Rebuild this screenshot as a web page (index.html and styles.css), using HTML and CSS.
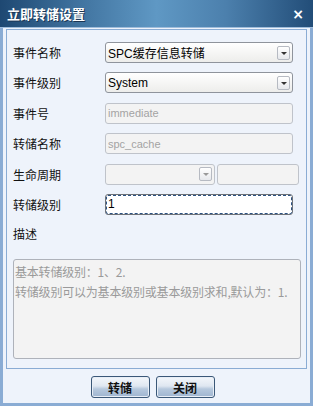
FILE: index.html
```html
<!DOCTYPE html>
<html lang="zh">
<head>
    <meta charset="UTF-8">
    <title>立即转储设置</title>
    <link rel="stylesheet" href="styles.css">
</head>
<body>
    <div class="dialog">
        <div class="titlebar">
            <span class="title">立即转储设置</span>
            <span class="close">×</span>
        </div>
        <div class="dialog-body">
            <div class="panel">
                <div class="row">
                    <span class="label">事件名称</span>
                    <div class="field select"><span class="val">SPC缓存信息转储</span><span class="arrow"></span></div>
                </div>
                <div class="row">
                    <span class="label">事件级别</span>
                    <div class="field select"><span class="val">System</span><span class="arrow"></span></div>
                </div>
                <div class="row">
                    <span class="label">事件号</span>
                    <div class="field disabled"><span class="val">immediate</span></div>
                </div>
                <div class="row">
                    <span class="label">转储名称</span>
                    <div class="field disabled"><span class="val">spc_cache</span></div>
                </div>
                <div class="row">
                    <span class="label">生命周期</span>
                    <div class="pair">
                        <div class="field disabled short"><span class="val"></span><span class="arrow dim"></span></div>
                        <div class="field disabled rest"></div>
                    </div>
                </div>
                <div class="row">
                    <span class="label">转储级别</span>
                    <div class="field focused"><span class="val">1</span></div>
                </div>
                <div class="desc-label">描述</div>
                <div class="desc">基本转储级别：1、2.
转储级别可以为基本级别或基本级别求和,默认为：1.</div>
            </div>
            <div class="buttons">
                <button class="btn">转储</button>
                <button class="btn">关闭</button>
            </div>
        </div>
    </div>
</body>
</html>
```

FILE: styles.css
```css
body {
    margin: 0;
    font-family: "Liberation Sans", "Noto Sans CJK SC", sans-serif;
    font-size: 12px;
}
.dialog {
    width: 313px;
    height: 406px;
    display: flex;
    flex-direction: column;
    background: #eef3fb;
}
.titlebar {
    height: 28px;
    display: flex;
    align-items: center;
    justify-content: space-between;
    padding: 0 9px 0 7px;
    box-sizing: border-box;
    background: linear-gradient(to right, #1e4872 0%, #40739f 25%, #5f98c4 50%, #4c80ad 72%, #224d78 100%);
    border-bottom: 1px solid #9fbddc;
    color: #fff;
}
.title {
    font-family: "Noto Sans CJK SC", sans-serif;
    font-size: 13px;
    font-weight: bold;
    text-shadow: 1px 1px 0 #1b3553;
}
.close {
    font-family: "DejaVu Sans", sans-serif;
    font-size: 14px;
    font-weight: bold;
}
.dialog-body {
    flex: 1;
    border: 3px solid #8aacd4;
    border-top: 0;
    display: flex;
    flex-direction: column;
}
.panel {
    margin: 1px 3px 0 3px;
    height: 340px;
    box-sizing: border-box;
    border: 1px solid #8aacd4;
    padding: 12px 0 0 6px;
}
.row {
    display: flex;
    align-items: center;
    height: 21px;
    margin-bottom: 9.4px;
}
.label {
    width: 92px;
    font-family: "Noto Sans CJK SC", sans-serif;
    color: #111;
}
.field {
    width: 188px;
    height: 21px;
    box-sizing: border-box;
    border: 1px solid #a9adb6;
    border-radius: 3px;
    display: flex;
    align-items: center;
    justify-content: space-between;
    padding: 0 2px 0 2px;
    font-size: 11px;
    color: #000;
}
.val {
    font-family: "Liberation Sans", "Noto Sans CJK SC", sans-serif;
}
.select .val {
    font-size: 12px;
}
.select {
    background: linear-gradient(#ffffff, #ededeb);
    border-color: #8f949c;
}
.arrow {
    width: 11px;
    height: 12px;
    border: 1px solid #b6bac2;
    border-radius: 2px;
    background: linear-gradient(#ffffff, #e6e8ec) no-repeat;
    position: relative;
}
.arrow::after {
    content: "";
    position: absolute;
    left: 3px;
    top: 5px;
    border-left: 3px solid transparent;
    border-right: 3px solid transparent;
    border-top: 3px solid #333;
}
.arrow.dim::after {
    border-top-color: #999;
}
.disabled {
    background: #f3f3f3;
    border-color: #bfc3ca;
    color: #a3a3a3;
}
.pair {
    display: flex;
    gap: 2px;
}
.short {
    width: 110px;
}
.rest {
    width: 82px;
}
.focused {
    background: #fff;
    border-color: #6e7278;
    outline: 1px dashed #2c5282;
    outline-offset: -2px;
    font-size: 12px;
}
.desc-label {
    font-family: "Noto Sans CJK SC", sans-serif;
    margin-top: 5px;
    line-height: 20px;
    color: #111;
}
.desc {
    margin-top: 15px;
    width: 288px;
    height: 100px;
    box-sizing: border-box;
    border: 1px solid #aeb2ba;
    border-radius: 3px;
    background: #f3f3f3;
    color: #9a9a9a;
    white-space: pre;
    line-height: 20px;
    padding: 2px 0 0 1px;
    font-family: "Noto Sans CJK SC", sans-serif;
    letter-spacing: -0.2px;
}
.buttons {
    display: flex;
    justify-content: center;
    gap: 6px;
    padding-top: 7px;
    padding-right: 8px;
}
.btn {
    width: 59px;
    height: 22px;
    border: 1px solid #3b5878;
    border-radius: 3px;
    background: linear-gradient(#f4f7fb 0%, #dfe7f1 45%, #b6c8dd 60%, #9fb5d0 100%);
    box-shadow: inset 0 0 0 1px #e8eef6;
    font-family: "Noto Sans CJK SC", sans-serif;
    font-size: 12px;
    font-weight: bold;
    color: #111;
    padding: 0;
}
```
